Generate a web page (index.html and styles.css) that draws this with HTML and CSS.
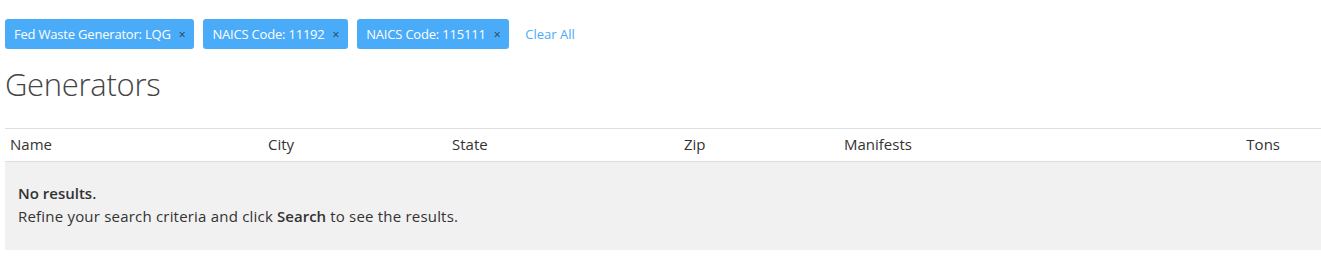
FILE: index.html
```html
<!DOCTYPE html>
<html lang="en">
<head>
  <meta charset="UTF-8" />
  <title>Generators</title>
  <link rel="stylesheet" href="styles.css">
</head>
<body>
  <div class="filters">
    <span class="tag">Fed Waste Generator: LQG <span class="tag-x">&times;</span></span>
    <span class="tag">NAICS Code: 11192 <span class="tag-x">&times;</span></span>
    <span class="tag">NAICS Code: 115111 <span class="tag-x">&times;</span></span>
    <a class="clear-all" href="#">Clear All</a>
  </div>

  <h1>Generators</h1>

  <div class="results">
    <div class="results-head">
      <div class="col">Name</div>
      <div class="col">City</div>
      <div class="col">State</div>
      <div class="col">Zip</div>
      <div class="col">Manifests</div>
      <div class="col col-right">Tons</div>
      <div class="col"></div>
    </div>
    <div class="results-empty">
      <div class="empty-title">No results.</div>
      <div class="empty-text">Refine your search criteria and click <b>Search</b> to see the results.</div>
    </div>
  </div>
</body>
</html>
```

FILE: styles.css
```css
* {
  margin: 0;
  padding: 0;
  box-sizing: border-box;
}
body {
  font-family: 'Open Sans', 'Noto Sans', sans-serif;
  color: #333;
  background: #fff;
  padding: 19px 0 0 5px;
}
.filters {
  display: flex;
  align-items: center;
  gap: 9px;
  height: 30px;
}
.tag {
  display: inline-flex;
  align-items: center;
  height: 30px;
  padding: 0 9px;
  background: #4aabf8;
  color: #fff;
  border-radius: 3px;
  font-size: 13px;
  letter-spacing: -0.2px;
}
.tag-x {
  color: #2f3a45;
  font-size: 12px;
  margin-left: 8px;
}
.clear-all {
  color: #4aabf8;
  text-decoration: none;
  font-size: 13px;
  margin-left: 7px;
}
h1 {
  font-size: 31px;
  font-weight: 300;
  color: #444;
  margin: 15px 0 0 0;
  line-height: 40px;
  letter-spacing: -0.3px;
}
.results {
  margin-top: 24px;
  border-top: 1px solid #dedede;
}
.results-head {
  display: grid;
  grid-template-columns: 258px 184px 232px 160px 1fr 120px 36px;
  height: 33px;
  align-items: center;
  border-bottom: 1px solid #dedede;
}
.col {
  padding: 0 5px 3px;
  font-size: 15px;
  font-weight: 500;
  color: #333;
}
.col-right {
  text-align: right;
}
.results-empty {
  background: #f1f1f1;
  height: 88px;
  padding: 20px 13px 0;
  font-size: 15px;
  letter-spacing: 0.2px;
  line-height: 23px;
}
.empty-title {
  font-weight: 600;
  letter-spacing: 0;
}
.empty-text b {
  font-weight: 600;
  letter-spacing: 0;
}
```
